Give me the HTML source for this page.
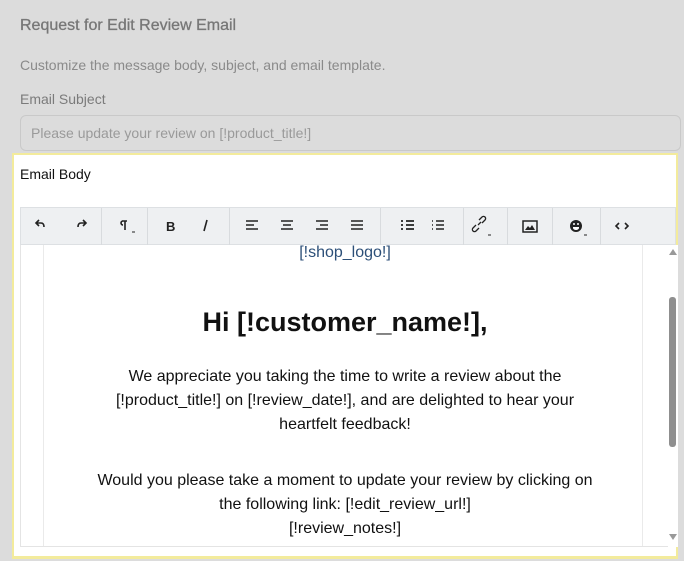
<!DOCTYPE html>
<html><head><meta charset="utf-8"><style>
*{box-sizing:border-box;margin:0;padding:0}
body{width:684px;height:561px;background:#dcdcdc;font-family:"Liberation Sans",sans-serif;position:relative;overflow:hidden}
.abs{position:absolute}
.t1{left:20px;top:17px;font-size:16px;color:#777;-webkit-text-stroke:0.3px #777}
.t2{left:20px;top:57px;font-size:14px;color:#8a8a8a}
.t3{left:20px;top:91px;font-size:14px;color:#7b7b7b}
.inp{left:20px;top:115px;width:661px;height:36px;border:1px solid #c9c9c9;border-radius:6px;font-size:14px;color:#9a9a9a;padding:9px 10px}
.box{left:12px;top:153px;width:666px;height:406px;background:#fff;border:2px solid #f3eb9c;border-bottom-width:3px}
.lab{left:20px;top:166px;font-size:14px;color:#111}
.tb{left:20px;top:207px;width:656px;height:38px;background:#eef0f2;border:1px solid #dde0e3}
.sep{position:absolute;top:0;width:1px;height:37px;background:#d8dbde}
.ed{left:20px;top:245px;width:648px;height:302px;background:#fff;border-left:1px solid #e4e4e4;border-bottom:1px solid #e4e4e4;overflow:hidden}
.c{position:absolute;left:0;width:648px;text-align:center;color:#111}
.sb{left:668px;top:245px;width:10px;height:302px;background:#fff}
</style></head><body>
<div class="abs t1">Request for Edit Review Email</div>
<div class="abs t2">Customize the message body, subject, and email template.</div>
<div class="abs t3">Email Subject</div>
<div class="abs inp">Please update your review on [!product_title!]</div>
<div class="abs box"></div>
<div class="abs lab">Email Body</div>
<div class="abs tb">
<div class="sep" style="left:80px"></div><div class="sep" style="left:126px"></div><div class="sep" style="left:208px"></div><div class="sep" style="left:359px"></div><div class="sep" style="left:442px"></div><div class="sep" style="left:486px"></div><div class="sep" style="left:531px"></div><div class="sep" style="left:579px"></div>
<svg width="656" height="37" style="position:absolute;left:0;top:0" fill="none" stroke="#222" stroke-width="1.6">
<path d="M18 18l-3-3 3-3M15 15h5q3 0 3 4"/>
<path d="M62 12l3 3-3 3M65 15h-5q-3 0-3 4"/>
<path d="M101 13h5M104 13v9M102 13a2 2 0 0 0 0 4"/><path d="M111 24h3" stroke-width="1"/>
<text x="145" y="23" font-family="Liberation Sans" font-size="13" font-weight="bold" fill="#222" stroke="none">B</text>
<path d="M186 12l-3 11" />
<path d="M225 13h12M225 17h8M225 21h12"/>
<path d="M260 13h12M262 17h8M260 21h12"/>
<path d="M295 13h12M299 17h8M295 21h12"/>
<path d="M330 13h12M330 17h12M330 21h12"/>
<path d="M380 13h2M385 13h8M380 17h2M385 17h8M380 21h2M385 21h8" stroke-width="1.8"/>
<path d="M411 13h1M411 17h1M411 21h1M415 13h8M415 17h8M415 21h8" stroke-width="1.6"/>
<path d="M458 20l-3 3a2 2 0 0 1-3-3l3-3M461 15l3-3a2 2 0 0 0-3-3l-3 3M457 17l3-3" stroke-width="1.3"/><path d="M467 27h3" stroke-width="1"/>
<rect x="502" y="13" width="14" height="11" stroke-width="1.5"/><path d="M504 22l3-4 2 2 2-3 3 5z" fill="#222" stroke="none"/>
<circle cx="555" cy="18" r="6" fill="#222" stroke="none"/><circle cx="553" cy="16" r="1" fill="#fff" stroke="none"/><circle cx="557" cy="16" r="1" fill="#fff" stroke="none"/><path d="M552 19h6v1a3 2 0 0 1-6 0z" fill="#fff" stroke="none"/><path d="M563 27h3" stroke-width="1"/>
<path d="M598 15l-3 3 3 3M604 15l3 3-3 3"/>
</svg>
</div>
<div class="abs ed">
<div style="position:absolute;left:22px;top:0;width:600px;height:302px;border-left:1px solid #eaeaea;border-right:1px solid #eaeaea"></div>
<div class="c" style="top:-1px;font-size:16px;color:#2c4f78">[!shop_logo!]</div>
<div class="c" style="top:62px;font-size:27px;font-weight:bold">Hi [!customer_name!],</div>
<div class="c" style="top:120px;font-size:16px;line-height:24px">We appreciate you taking the time to write a review about the<br>[!product_title!] on [!review_date!], and are delighted to hear your<br>heartfelt feedback!</div>
<div class="c" style="top:224px;font-size:16px;line-height:24px">Would you please take a moment to update your review by clicking on<br>the following link: [!edit_review_url!]<br>[!review_notes!]</div>
</div>
<div class="abs sb">
<div style="position:absolute;left:1px;top:4px;border:4px solid transparent;border-bottom:6px solid #999;border-top:0"></div>
<div style="position:absolute;left:1px;top:52px;width:7px;height:150px;background:#8f8f8f;border-radius:3px"></div>
<div style="position:absolute;left:1px;top:289px;border:4px solid transparent;border-top:6px solid #999;border-bottom:0"></div>
</div>
</body></html>
